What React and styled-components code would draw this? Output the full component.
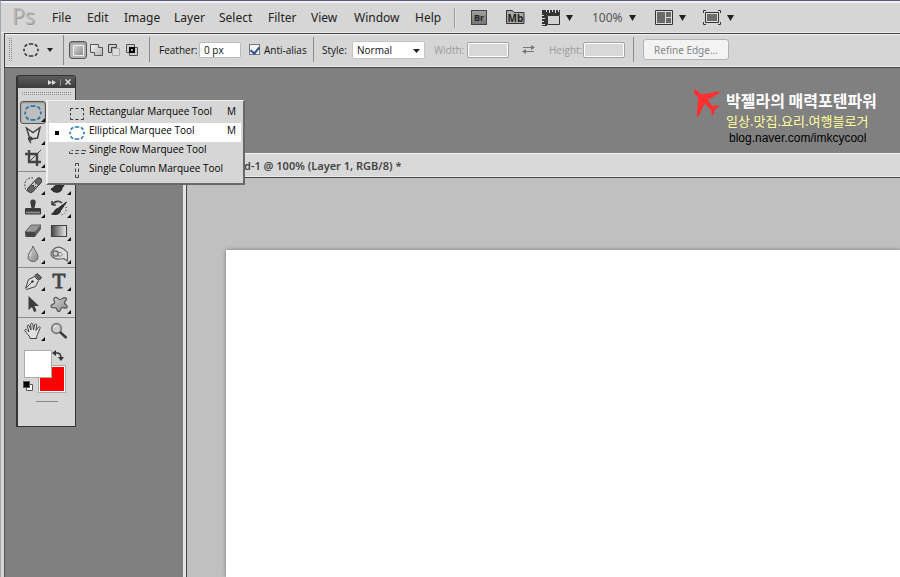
import React from "react";
import styled, { createGlobalStyle, css } from "styled-components";

const Global = createGlobalStyle`
  * { box-sizing: border-box; }
  body { margin: 0; background: #808080; }
  button, input, select { font: inherit; color: inherit; margin: 0; }
  svg { display: block; flex: none; }
`;

const uiFont = '"Noto Sans", "Open Sans", sans-serif';
const smallFont = '"Open Sans", "Noto Sans", sans-serif';

const Frame = styled.div`
  min-height: 100vh;
  display: flex;
  flex-direction: column;
  overflow: hidden;
  background: #d6d6d6;
  border-top: 1px solid #565b7c;
  border-left: 1px solid #a5a5ad;
  font-family: ${uiFont};
  color: #222;
`;

/* ---------- menu bar ---------- */

const MenuBar = styled.header`
  display: flex;
  align-items: center;
  height: 32px;
  padding-left: 11px;
  border-top: 2px solid #f0f0f4;
  border-bottom: 1px solid #ececec;
  white-space: nowrap;
`;

const Logo = styled.span`
  width: 31px;
  padding-bottom: 3px;
  font: 21px/26px "Open Sans", sans-serif;
  color: #bababa;
  text-shadow: 1px 1px 0 #999;
`;

const MenuNav = styled.nav`
  display: flex;
`;

const MenuItem = styled.button`
  flex: none;
  width: ${(p) => p.$width}px;
  padding: 0 0 0 9px;
  border: 0;
  background: none;
  text-align: left;
  font-size: 12px;
  line-height: 20px;
`;

const MenuRule = styled.span`
  width: 2px;
  height: 20px;
  background: #9a9a9a;
  border-right: 1px solid #e4e4e4;
  margin-right: 15px;
`;

const AppButton = styled.button`
  display: flex;
  align-items: center;
  gap: 6px;
  flex: none;
  width: ${(p) => p.$width}px;
  padding: 0;
  border: 0;
  background: none;
  font-size: 12px;
  line-height: 20px;
  color: #555;
`;

const BridgeBadge = styled.span`
  width: 16px;
  height: 15px;
  border: 1px solid #444;
  background: linear-gradient(#a0a0a0, #757575);
  font: bold 9px/13px "Open Sans", sans-serif;
  text-align: center;
  color: #222;
`;

/* ---------- options bar ---------- */

const OptionsBar = styled.section`
  display: flex;
  align-items: center;
  height: 35px;
  margin-left: 3px;
  padding: 0 0 2px 4px;
  border: 1px solid #444;
  border-width: 1px 0 1px 1px;
  box-shadow: inset 0 1px #f2f2f2, inset 0 -1px #f0f0f0;
  font-family: ${smallFont};
  font-size: 10px;
  line-height: 16px;
  color: #111;
  white-space: nowrap;
`;

const BarGrip = styled.span`
  width: 3px;
  height: 24px;
  margin-right: 11px;
  background: conic-gradient(#8c8c8c 25%, transparent 0) -1px 0 / 2px 2px;
`;

const ToolPreset = styled.button`
  display: flex;
  align-items: center;
  gap: 8px;
  width: 40px;
  padding: 0;
  border: 0;
  background: none;
`;

const BarRule = styled.span`
  flex: none;
  width: 1px;
  height: ${(p) => (p.$tall ? 30 : 25)}px;
  margin-right: ${(p) => p.$after}px;
  background: #8b8b8b;
`;

const ModeGroup = styled.div`
  display: flex;
  width: 80px;
`;

const ModeButton = styled.button`
  flex: none;
  width: 18px;
  height: 18px;
  padding: 0;
  display: grid;
  place-items: center;
  background: none;
  border: 1px solid transparent;
  border-radius: 3px;
  ${(p) =>
    p.$active &&
    css`
      border-color: #555;
      background: #b9b9b9;
      box-shadow: inset 0 1px 2px #888;
    `}
`;

const BarLabel = styled.label`
  flex: none;
  width: ${(p) => p.$width}px;
  color: ${(p) => (p.$off ? "#9b9b9b" : "#111")};
`;

const BarInput = styled.input`
  flex: none;
  width: 42px;
  height: 16px;
  padding: 0 4px;
  margin-right: ${(p) => p.$after}px;
  border: 1px solid #bbb;
  border-radius: 2px;
  background: #fff;
  &:disabled {
    background: #d8d8d8;
    border-color: #a5a5a5;
    box-shadow: inset 0 0 0 1px #fff;
  }
`;

const Tick = styled.input`
  appearance: none;
  width: 11px;
  height: 11px;
  margin-right: 4px;
  border: 1px solid #777;
  background: #f2f4f8;
  display: grid;
  place-items: center;
  &:checked::before {
    content: "";
    width: 4px;
    height: 7px;
    border: solid #34508f;
    border-width: 0 2px 2px 0;
    transform: rotate(40deg);
    margin-bottom: 2px;
  }
`;

const SelectBox = styled.span`
  position: relative;
  width: 73px;
  margin-right: 9px;
  svg {
    position: absolute;
    right: 5px;
    top: 8px;
    pointer-events: none;
  }
`;

const StyleSelect = styled.select`
  appearance: none;
  display: block;
  width: 100%;
  height: 18px;
  padding: 0 4px;
  border: 1px solid #c4c4c4;
  border-radius: 2px;
  background: #fff;
`;

const SwapButton = styled.button`
  width: 27px;
  padding: 0;
  border: 0;
  background: none;
`;

const RefineButton = styled.button`
  width: 86px;
  height: 21px;
  padding: 0;
  border: 1px solid #b2b2b2;
  border-radius: 3px;
  background: #f3f3f3;
  font-family: ${uiFont};
  font-size: 10px;
  color: #858585;
`;

/* ---------- workspace ---------- */

const Workspace = styled.main`
  flex: 1;
  display: flex;
  align-items: stretch;
  margin-left: 3px;
  border-left: 1px solid #555;
  background: #808080;
`;

const Toolbox = styled.aside`
  position: relative;
  z-index: 2;
  flex: none;
  align-self: flex-start;
  width: 60px;
  margin: 7px 107px 0 11px;
  padding-bottom: 24px;
  border: 1px solid #333;
  border-width: 1px 1px 1px 2px;
  border-radius: 3px 3px 0 0;
  background: #d6d6d6;
`;

const ToolboxTitle = styled.div`
  display: flex;
  justify-content: flex-end;
  align-items: center;
  gap: 4px;
  height: 12px;
  padding-right: 4px;
  background: linear-gradient(#5b5b5b, #3c3c3c);
`;

const TitleButton = styled.button`
  padding: 0;
  border: 0;
  background: none;
`;

const TitleRule = styled.span`
  width: 1px;
  height: 7px;
  background: #888;
`;

const ToolboxGrip = styled.div`
  height: 3px;
  margin: 4px 3px 6px;
  background: conic-gradient(#8c8c8c 25%, transparent 0) 0 0 / 2px 2px;
`;

const ToolGroup = styled.div`
  display: grid;
  grid-template-columns: 26px 26px;
  grid-auto-rows: 23px;
  padding-left: 2px;
  & + & {
    margin-top: 1px;
    padding-top: 2px;
    border-top: 1px solid #8c8c8c;
  }
`;

const ToolButton = styled.button`
  position: relative;
  padding: 0 0 ${(p) => (p.$active ? 0 : 2)}px;
  display: grid;
  place-items: center;
  border: 1px solid transparent;
  border-radius: 3px;
  background: none;
  ${(p) =>
    p.$active &&
    css`
      border-color: #555;
      background: #bebebe;
      box-shadow: inset 0 1px 2px #8a8a8a;
    `}
  ${(p) =>
    p.$more &&
    css`
      &::after {
        content: "";
        position: absolute;
        right: 0;
        bottom: 1px;
        border: 2px solid #111;
        border-top-color: transparent;
        border-left-color: transparent;
      }
    `}
`;

const TypeGlyph = styled.span`
  font: 21px/20px "Liberation Serif", serif;
  color: #444;
  -webkit-text-stroke: 1px #444;
`;

const Swatches = styled.div`
  display: grid;
  grid-template-columns: 14px 14px 13px;
  grid-template-rows: 15px 13px 14px;
  width: 41px;
  margin: 7px 0 9px 6px;
`;

const Swatch = styled.button`
  padding: 0;
  width: 28px;
  height: 28px;
  border: 1px solid #aaa;
  background: ${(p) => p.$color};
  box-shadow: inset 0 0 0 1px #fff;
  grid-area: ${(p) => p.$area};
  z-index: ${(p) => (p.$front ? 1 : 0)};
`;

const SmallTool = styled.button`
  padding: 0;
  border: 0;
  background: none;
  grid-area: ${(p) => p.$area};
  align-self: ${(p) => p.$align};
  justify-self: ${(p) => p.$align};
`;

const ToolboxLine = styled.div`
  width: 22px;
  height: 1px;
  margin: 0 auto;
  background: #8a8a8a;
`;

const Flyout = styled.ul`
  position: absolute;
  left: 28px;
  top: 24px;
  z-index: 3;
  width: 199px;
  margin: 0;
  padding: 3px 2px 3px 1px;
  list-style: none;
  border: 2px solid #686868;
  border-width: 1px 2px 2px 2px;
  border-left-color: #eee;
  border-top-color: #eee;
  background: #d6d6d6;
`;

const FlyoutItem = styled.button`
  display: grid;
  grid-template-columns: 20px 20px 1fr auto;
  align-items: center;
  width: 100%;
  height: 19px;
  padding: 0 5px 0 0;
  border: 0;
  background: ${(p) => (p.$active ? "#fff" : "transparent")};
  text-align: left;
  font-family: ${smallFont};
  font-size: 10px;
  line-height: 14px;
  color: #000;
  white-space: nowrap;
`;

const Bullet = styled.i`
  width: 4px;
  height: 4px;
  margin-left: 6px;
  background: ${(p) => (p.$on ? "#000" : "transparent")};
`;

const FlyoutText = styled.span`
  padding-bottom: 5px;
`;

/* ---------- document ---------- */

const DocumentColumn = styled.div`
  flex: 1;
  min-width: 0;
  display: flex;
  flex-direction: column;
`;

const Banner = styled.div`
  display: flex;
  justify-content: flex-end;
  align-items: flex-start;
  gap: 6px;
  height: 85px;
  padding: 21px 25px 0 0;
`;

const BannerText = styled.div`
  width: 149px;
  white-space: nowrap;
`;

const BannerName = styled.div`
  font: bold 16px/22px "Noto Sans CJK KR", sans-serif;
  color: #fff;
`;

const BannerTopic = styled.div`
  font: 13px/20px "Noto Sans CJK KR", sans-serif;
  color: #ffff9c;
`;

const BannerLink = styled.a`
  display: block;
  padding-left: 3px;
  font: 12px/14px "Liberation Sans", sans-serif;
  color: #000;
  text-decoration: none;
`;

const DocumentWindow = styled.section`
  flex: 1;
  display: flex;
  flex-direction: column;
  border-left: 3px solid #e4e4e4;
`;

const DocumentTab = styled.h1`
  height: 25px;
  margin: 0;
  padding-left: 58px;
  border-top: 1px solid #f5f5f5;
  border-bottom: 1px solid #444;
  background: #d8d8d8;
  box-shadow: inset 0 -1px #eee;
  font-size: 11px;
  font-weight: 600;
  line-height: 23px;
  color: #444;
  white-space: nowrap;
`;

const Pasteboard = styled.div`
  flex: 1;
  display: flex;
  padding: 72px 0 0 39px;
  border-left: 1px solid #444;
  background: #c0c0c0;
`;

const Paper = styled.div`
  flex: 1;
  background: #fff;
  box-shadow: 0 0 4px #777;
`;

/* ---------- drawings ---------- */

const Down = ({ w = 7, h = 6 }) => (
  <svg width={w} height={h} viewBox="0 0 7 6" preserveAspectRatio="none">
    <path d="M0 0h7L3.500 6z" fill="#222" />
  </svg>
);

const Ellipse = ({ color, size = 16 }) => (
  <svg width={size} height={size} viewBox="0 0 18 18" fill="none" stroke={color} strokeWidth="1.800">
    <path d="M6.500 2.200h5M6.500 15.800h5M1.200 7.500v3M16.800 7.500v3M2 5.300C2.600 4 3.400 3.200 4.700 2.700M13.300 2.700c1.300.5 2.100 1.300 2.700 2.600M2 12.700c.6 1.300 1.400 2.100 2.700 2.600M13.300 15.300c1.300-.5 2.100-1.300 2.700-2.600" />
  </svg>
);

const RectMarquee = () => (
  <svg width="16" height="14" viewBox="0 0 16 14" fill="none" stroke="#333">
    <path d="M1.500 4V1.500H4M6.500 1.500h3M12 1.500h2.500V4M14.500 6v2.500M14.500 10.500v2H12M9.500 12.500h-3M4 12.500H1.500v-2M1.500 8.500V6" />
  </svg>
);

const RowMarquee = () => (
  <svg width="17" height="6" viewBox="0 0 17 6" fill="none" stroke="#444">
    <path d="M4 1.500H2.500M.5 2.500v2H4M6.500 1.500H10M6 4.500h3.500M12.500 1.500h4v1M12 4.500h4" />
  </svg>
);

const ColumnMarquee = () => (
  <svg width="16" height="17" viewBox="0 0 16 17" fill="none" stroke="#444">
    <path d="M6.500 4V1.500h3V4M6.500 6.500V10M9.500 6.500V10M6.500 12.500v3h3v-3" />
  </svg>
);

const MiniBridge = () => (
  <svg width="19" height="17" viewBox="0 0 19 17">
    <path d="M.5 1.500h6l1.500 2h10v11H.5z" fill="#aaa" stroke="#333" />
    <text x="9.500" y="12.500" textAnchor="middle" fontFamily="Open Sans" fontWeight="bold" fontSize="10" fill="#222">Mb</text>
  </svg>
);

const Rulers = () => (
  <svg width="18" height="16" viewBox="0 0 18 16">
    <path d="M0 0h18v5H5v11H0z" fill="#333" />
    <path d="M5.500 5.500h12v9h-12z" fill="#d2d2d2" stroke="#333" />
    <path d="M4.500 0v2M7.500 0v3M10.500 0v2M13.500 0v3M16.500 0v2M0 5.500h2M0 8.500h3M0 11.500h2M0 14.500h3" stroke="#ddd" />
  </svg>
);

const Arrange = () => (
  <svg width="18" height="15" viewBox="0 0 18 15">
    <path d="M.5.5h17v14H.5z" fill="#ddd" stroke="#333" />
    <path d="M2 2h8v11H2zM11 2h5v5h-5zM11 8h5v5h-5z" fill="#696969" />
  </svg>
);

const Screen = () => (
  <svg width="18" height="15" viewBox="0 0 18 15">
    <path d="M.5 3V.5H3M15 .5h2.500V3M17.500 12v2.500H15M3 14.500H.500V12" fill="none" stroke="#333" />
    <path d="M2.500 2.500h13v10h-13z" fill="#ddd" stroke="#333" />
    <path d="M4 4h10v7H4z" fill="#6c6c6c" />
  </svg>
);

const modes = [
  ["New selection", <path key="a" d="M2.500 2.500h10v10h-10z" fill="url(#metal)" stroke="#eee" />],
  ["Add to selection", <path key="b" d="M1.500 1.500h8v3h4v8h-8v-3h-4z" fill="url(#pale)" stroke="#555" />],
  ["Subtract from selection", <React.Fragment key="c"><path d="M5.500 5.500h7v7h-7z" fill="#ddd" stroke="#aaa" /><path d="M1.500 1.500h8v3h-5v5h-3z" fill="#ccc" stroke="#444" /></React.Fragment>],
  ["Intersect with selection", <React.Fragment key="d"><path d="M1.500 1.500h8v8h-8zM4.500 4.500h8v8h-8z" fill="#ccc" stroke="#555" /><path d="M5 5h4v4H5z" fill="#aaa" stroke="#000" strokeWidth="2" /></React.Fragment>],
];

const Swap = () => (
  <svg width="13" height="11" viewBox="0 0 13 11" fill="#777">
    <path d="M1 3h8V1l4 2.500L9 6V4H1zM12 7H4V5L0 7.500 4 10V8h8z" />
  </svg>
);

const toolArt = {
  lasso: <><path d="M2.500 2l6.500 4.500L16 1.500 13.500 12 6 13z" fill="#ddd" stroke="#444" strokeWidth="1.500" /><path d="M8 11.500c-3-1.500-5 2-2 3l3-2M6 14c-1 1 0 2 1 3" fill="none" stroke="#333" strokeWidth="1.200" /></>,
  wand: <path d="M4 15L14 5M13 2v2M16 6h2M16 3l1-1" fill="none" stroke="#333" strokeWidth="2" />,
  crop: <><path d="M5 1v12h12M1 5h12v12" fill="none" stroke="#444" strokeWidth="2.400" /><path d="M5 13L17 1" stroke="#444" /></>,
  dropper: <path d="M3 15l8-8 3 3-8 7zM11 3l4 4" fill="#aaa" stroke="#333" strokeWidth="1.500" />,
  heal: <><path d="M9 2C4 1 0 5 1 10c0 3 1 5 4 6" fill="none" stroke="#333" strokeDasharray="1.500 1.500" /><path d="M13 2.500q2-1.800 4 .2t0 4L8.500 16q-2 1.500-4-.3t-.3-4z" fill="#666" stroke="#333" /><path d="M7.500 8.500l4 4 3-3.500-4-3.500z" fill="#ccc" stroke="#444" /><path d="M9 9.500h1M11 8h1M11 10.500h1" stroke="#333" /></>,
  brush: <path d="M16 2L9 9l3 3 5-7zM9 9c-4-1-5 3-8 4 3 5 11 4 11-1z" fill="#333" stroke="#222" />,
  stamp: <><path d="M6.500 4.500a2.800 2.800 0 1 1 5 0L10.500 9h5.500q1 0 1 1v2H1v-2q0-1 1-1h5.500z" fill="#3c3c3c" /><path d="M1.500 12h15v3h-15z" fill="#888" stroke="#333" /></>,
  history: <><path d="M16.500 3L11 11 8.500 9zM8 9.500l2.500 2c0 4-5 4.500-9 3.500C5 14 4 10 8 9.500z" fill="#333" stroke="#222" /><path d="M2 6c3-5 8-4 10-2M2 6V2M2 6h4" fill="none" stroke="#444" strokeWidth="1.700" /><path d="M16 8c1 4-1 7-5 8" fill="none" stroke="#333" strokeDasharray="1 2" /></>,
  eraser: <><path d="M7 3h10l-6 7H1z" fill="#999" stroke="#666" /><path d="M1 10h10v5H1.500z" fill="#444" /><path d="M11 10l6-7v4l-6 8z" fill="#5d5d5d" /></>,
  gradient: <path d="M1.500 3.500h15v11h-15z" fill="url(#fade)" stroke="#444" strokeWidth="1.200" />,
  drop: <><path d="M9 1C8 5 4 8 4 12c0 6 10 6 10 0 0-4-4-7-5-11z" fill="url(#metal)" stroke="#666" /><path d="M6 11c0-2 1-3 2-4" stroke="#eee" fill="none" /></>,
  sponge: <><path d="M4 4C8 0 14 3 17.500 7.500V16l-4-2.500c-4 1-8 1-11-1.500-3-3-1-6 1.500-8z" fill="#dedede" stroke="#666" strokeWidth="1.200" /><circle cx="5.500" cy="8.500" r="2.700" fill="#ccc" stroke="#666" strokeWidth="1.300" /><path d="M8.500 7.500c2-.5 3 .5 4 2-1 2-3 2-4.500 1" fill="none" stroke="#777" /></>,
  pen: <><path d="M1.500 16.500l3-9 6-3 4 4-3 6-9 3z" fill="#ddd" stroke="#444" /><path d="M11 3.500L13 1.500l4.500 4-2 2.500z" fill="#666" stroke="#333" /><path d="M2 16l6.500-6.500" stroke="#444" /><circle cx="8.500" cy="9.500" r="1.200" fill="#333" /></>,
  arrow: <path d="M4.500 1v14l3.500-3 2 5 2.500-1-2-5H15z" fill="#3d3d3d" />,
  shape: <path d="M5 2.500c2-1 3 2 5 2 2 0 4-3 6-1.500 2 2-2 3-1.500 5 .5 2 3.500 2 2.500 4.500-1 2-4-1-5.500.5-1.500 1-.5 4-3 3.500-2-.5-1-2.500-2.500-3.500C4 12 1.500 14 1 11.500c-.5-2 3-2 3.500-3.500.5-2-2-4 .5-5.500z" fill="url(#metal)" stroke="#555" strokeWidth="1.200" />,
  hand: <path d="M6 16.500c0-2-1.500-3-3-5L.7 8.500C1 7 2.500 7.200 3.500 8.500L5 10 3.300 4.300C3.200 2.700 4.800 2.500 5.300 4L7 8l-.3-5.800C7 .8 8.500.8 8.800 2.200L9.500 8l1.200-5.200c.5-1.300 2-1 1.900.4L12 8.500l2.400-3.300c1-1 2.200-.2 1.700 1L14 11c-.5 2-1.500 3-1.500 5.500z" fill="#e1e1e1" stroke="#444" />,
  zoom: <><circle cx="6.500" cy="6.500" r="4.800" fill="#ccc" stroke="#777" strokeWidth="1.700" /><path d="M10 10l6.500 6" stroke="#3b3b3b" strokeWidth="2.400" /><path d="M4 5.500q1-2 3-2" fill="none" stroke="#eee" /></>,
};

const ToolIcon = ({ name }) => {
  if (name === "marquee") return <Ellipse color="#247aa8" size={18} />;
  if (name === "type") return <TypeGlyph>T</TypeGlyph>;
  return <svg width="18" height="18" viewBox="0 0 18 18">{toolArt[name]}</svg>;
};

const Plane = () => (
  <svg width="27" height="28" viewBox="0 0 27 28">
    <path
      d="M1 0.500C3 0 6 3 8.500 5.500L25 2.500c2 0 2 1.500.5 2.300L14.500 11l5 6 5.500-.8c1.500 0 1.500 1.200.5 1.800L22 20.500l-1.500 5c-1 1-2 .5-2-.5l-.5-4-6.500-6.500L6 26.500c-1 1.500-2.300 1-2.300-.5L5.200 8.800C3 6.500-.5 2.500 1 .5z"
      fill="#ff3030"
    />
  </svg>
);

const Defs = () => (
  <svg width="0" height="0">
    <defs>
      <linearGradient id="metal" x1="0" y1="0" x2="1" y2="1">
        <stop offset="0" stopColor="#d8d8d8" />
        <stop offset="1" stopColor="#888" />
      </linearGradient>
      <linearGradient id="pale" x1="0" y1="0" x2="1" y2="1">
        <stop offset="0" stopColor="#f4f4f4" />
        <stop offset="1" stopColor="#b4b4b4" />
      </linearGradient>
      <linearGradient id="fade">
        <stop offset="0" stopColor="#444" />
        <stop offset="1" stopColor="#eee" />
      </linearGradient>
    </defs>
  </svg>
);

/* ---------- data ---------- */

const menus = [
  ["File", 35], ["Edit", 37], ["Image", 50], ["Layer", 45], ["Select", 49],
  ["Filter", 43], ["View", 43], ["Window", 61], ["Help", 48],
];

const groups = [
  [["Marquee", "marquee"], ["Move", "arrow"], ["Polygonal Lasso", "lasso"], ["Magic Wand", "wand"], ["Crop", "crop"], ["Eyedropper", "dropper"]],
  [["Healing Brush", "heal"], ["Brush", "brush"], ["Clone Stamp", "stamp"], ["History Brush", "history"], ["Eraser", "eraser"], ["Gradient", "gradient"], ["Blur", "drop"], ["Sponge", "sponge"]],
  [["Pen", "pen"], ["Type", "type"], ["Path Selection", "arrow"], ["Custom Shape", "shape"]],
  [["Hand", "hand"], ["Zoom", "zoom"]],
];

const marquees = [
  ["Rectangular Marquee Tool", <RectMarquee key="r" />, "M"],
  ["Elliptical Marquee Tool", <Ellipse key="e" color="#247aa8" />, "M", true],
  ["Single Row Marquee Tool", <RowMarquee key="s" />, ""],
  ["Single Column Marquee Tool", <ColumnMarquee key="c" />, ""],
];

export default function App() {
  return (
    <Frame>
      <Global />
      <MenuBar>
        <Logo>Ps</Logo>
        <MenuNav>
          {menus.map(([name, width]) => (
            <MenuItem key={name} $width={width}>{name}</MenuItem>
          ))}
        </MenuNav>
        <MenuRule />
        <AppButton $width={35} aria-label="Launch Bridge"><BridgeBadge>Br</BridgeBadge></AppButton>
        <AppButton $width={36} aria-label="Launch Mini Bridge"><MiniBridge /></AppButton>
        <AppButton $width={50} aria-label="View extras"><Rulers /><Down /></AppButton>
        <AppButton $width={63}>100% <Down /></AppButton>
        <AppButton $width={48} aria-label="Arrange documents"><Arrange /><Down /></AppButton>
        <AppButton $width={48} aria-label="Screen mode"><Screen /><Down /></AppButton>
      </MenuBar>

      <OptionsBar aria-label="Tool options">
        <BarGrip />
        <ToolPreset aria-label="Tool preset"><Ellipse color="#333" /><Down w={6} h={4} /></ToolPreset>
        <BarRule $tall $after={5} />
        <ModeGroup>
          {modes.map(([name, art], i) => (
            <ModeButton key={name} aria-label={name} $active={i === 0}>
              <svg width="14" height="14" viewBox="0 0 14 14">{art}</svg>
            </ModeButton>
          ))}
        </ModeGroup>
        <BarRule $after={9} />
        <BarLabel $width={40} htmlFor="feather">Feather:</BarLabel>
        <BarInput $after={8} id="feather" defaultValue="0 px" />
        <Tick id="alias" type="checkbox" defaultChecked />
        <BarLabel $width={49} htmlFor="alias">Anti-alias</BarLabel>
        <BarRule $after={8} />
        <BarLabel $width={30} htmlFor="style">Style:</BarLabel>
        <SelectBox>
          <StyleSelect id="style" defaultValue="Normal">
            <option>Normal</option>
            <option>Fixed Ratio</option>
            <option>Fixed Size</option>
          </StyleSelect>
          <Down w={7} h={4} />
        </SelectBox>
        <BarLabel $width={33} $off htmlFor="width">Width:</BarLabel>
        <BarInput $after={13} id="width" disabled />
        <SwapButton aria-label="Swap width and height"><Swap /></SwapButton>
        <BarLabel $width={34} $off htmlFor="height">Height:</BarLabel>
        <BarInput $after={8} id="height" disabled />
        <BarRule $after={9} />
        <RefineButton>Refine Edge...</RefineButton>
      </OptionsBar>

      <Workspace>
        <Toolbox aria-label="Tools">
          <ToolboxTitle>
            <TitleButton aria-label="Expand">
              <svg width="8" height="5" viewBox="0 0 8 5" fill="#ddd"><path d="M0 0l4 2.500L0 5zM4 0l4 2.500L4 5z" /></svg>
            </TitleButton>
            <TitleRule />
            <TitleButton aria-label="Close">
              <svg width="6" height="6" viewBox="0 0 6 6"><path d="M.5.5l5 5M5.500.5l-5 5" stroke="#ddd" strokeWidth="1.500" /></svg>
            </TitleButton>
          </ToolboxTitle>
          <ToolboxGrip />
          {groups.map((tools, g) => (
            <ToolGroup key={g}>
              {tools.map(([name, art]) => (
                <ToolButton key={name} aria-label={name} $active={art === "marquee"} $more={name !== "Zoom"}>
                  <ToolIcon name={art} />
                </ToolButton>
              ))}
            </ToolGroup>
          ))}
          <Flyout>
            {marquees.map(([name, icon, hotkey, active]) => (
              <li key={name}>
                <FlyoutItem $active={active}>
                  <Bullet $on={active} />
                  {icon}
                  <FlyoutText>{name}</FlyoutText>
                  <FlyoutText>{hotkey}</FlyoutText>
                </FlyoutItem>
              </li>
            ))}
          </Flyout>
          <Swatches>
            <Swatch $color="#fff" $front $area="1 / 1" aria-label="Foreground colour" />
            <Swatch $color="#f00" $area="2 / 2" aria-label="Background colour" />
            <SmallTool $area="1 / 3" $align="start" aria-label="Swap colours">
              <svg width="13" height="12" viewBox="0 0 13 12"><path d="M3 3h2q4 0 4 5" fill="none" stroke="#333" strokeWidth="1.500" /><path d="M4 0v6L0 3zM6 7h6l-3 4z" fill="#333" /></svg>
            </SmallTool>
            <SmallTool $area="3 / 1" $align="end" aria-label="Default colours">
              <svg width="15" height="11" viewBox="0 0 15 11"><path d="M3.500 3.500h6v6h-6z" fill="#fff" stroke="#555" /><path d="M0 0h7v7H0z" fill="#555" /><path d="M1 1h5v5H1z" /></svg>
            </SmallTool>
          </Swatches>
          <ToolboxLine />
        </Toolbox>

        <DocumentColumn>
          <Banner>
            <Plane />
            <BannerText>
              <BannerName>박젤라의 매력포텐파워</BannerName>
              <BannerTopic>일상.맛집.요리.여행블로거</BannerTopic>
              <BannerLink href="#blog">blog.naver.com/imkcycool</BannerLink>
            </BannerText>
          </Banner>
          <DocumentWindow>
            <DocumentTab>d-1 @ 100% (Layer 1, RGB/8) *</DocumentTab>
            <Pasteboard><Paper /></Pasteboard>
          </DocumentWindow>
        </DocumentColumn>
      </Workspace>
      <Defs />
    </Frame>
  );
}
